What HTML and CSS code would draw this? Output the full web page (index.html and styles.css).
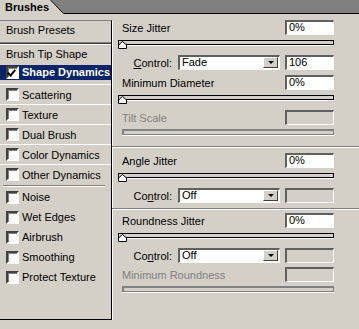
FILE: index.html
```html
<!DOCTYPE html>
<html lang="en">
<head>
<meta charset="UTF-8">
<meta name="viewport" content="width=device-width, initial-scale=1.0">
<title>Brushes</title>
<link rel="stylesheet" href="styles.css">
</head>
<body>
<div class="tabbar">
  <div class="tab">Brushes</div>
  <svg class="tab-slope" width="14" height="14" viewBox="0 0 14 14"><polygon points="0,0 1,0 14,14 0,14" fill="#d4d0c8"/><line x1="0.5" y1="0" x2="13.5" y2="13.5" stroke="#000"/></svg>
</div>

<div class="panel">
  <div class="list">
    <div class="head">Brush Presets</div>
    <div class="dbl"></div>
    <div class="head tip">Brush Tip Shape</div>
    <div class="item sel"><span class="chk on"></span>Shape Dynamics</div>
    <div class="item"><span class="chk"></span>Scattering</div>
    <div class="item"><span class="chk"></span>Texture</div>
    <div class="item"><span class="chk"></span>Dual Brush</div>
    <div class="item"><span class="chk"></span>Color Dynamics</div>
    <div class="item"><span class="chk"></span>Other Dynamics</div>
    <div class="split"></div>
    <div class="opt"><span class="chk"></span>Noise</div>
    <div class="opt"><span class="chk"></span>Wet Edges</div>
    <div class="opt"><span class="chk"></span>Airbrush</div>
    <div class="opt"><span class="chk"></span>Smoothing</div>
    <div class="opt"><span class="chk"></span>Protect Texture</div>
  </div>

  <div class="settings">
    <div class="field"><span>Size Jitter</span><span class="box">0%</span></div>
    <div class="track"><svg class="thumb" width="10" height="8" viewBox="0 0 10 8"><polygon points="0.5,7.5 0.5,4 4.5,0.5 8.5,4 8.5,7.5" fill="#fff" stroke="#000"/></svg></div>
    <div class="ctl"><span class="ctl-label"><u>C</u>ontrol:</span><span class="select">Fade<span class="drop"></span></span><span class="box">106</span></div>
    <div class="field gap5"><span>Minimum Diameter</span><span class="box">0%</span></div>
    <div class="track"><svg class="thumb" width="10" height="8" viewBox="0 0 10 8"><polygon points="0.5,7.5 0.5,4 4.5,0.5 8.5,4 8.5,7.5" fill="#fff" stroke="#000"/></svg></div>
    <div class="field gap10 off"><span>Tilt Scale</span><span class="box"></span></div>
    <div class="track off"></div>
    <div class="sep"></div>

    <div class="field gap5"><span>Angle Jitter</span><span class="box">0%</span></div>
    <div class="track"><svg class="thumb" width="10" height="8" viewBox="0 0 10 8"><polygon points="0.5,7.5 0.5,4 4.5,0.5 8.5,4 8.5,7.5" fill="#fff" stroke="#000"/></svg></div>
    <div class="ctl"><span class="ctl-label">Co<u>n</u>trol:</span><span class="select">Off<span class="drop"></span></span><span class="box"></span></div>
    <div class="sep short"></div>

    <div class="field gap3"><span>Roundness Jitter</span><span class="box">0%</span></div>
    <div class="track"><svg class="thumb" width="10" height="8" viewBox="0 0 10 8"><polygon points="0.5,7.5 0.5,4 4.5,0.5 8.5,4 8.5,7.5" fill="#fff" stroke="#000"/></svg></div>
    <div class="ctl"><span class="ctl-label">Co<u>n</u>trol:</span><span class="select">Off<span class="drop"></span></span><span class="box"></span></div>
    <div class="field gap4 off"><span>Minimum Roundness</span><span class="box"></span></div>
    <div class="track off"></div>
  </div>
</div>
</body>
</html>
```

FILE: styles.css
```css
body {
    margin: 0;
    background: #d4d0c8;
    font-family: "Liberation Sans", Arial, sans-serif;
    font-size: 11px;
    color: #000;
}

.tabbar {
    display: flex;
    height: 14px;
    background: linear-gradient(#808080 13px, #000 13px);
}

.tab {
    width: 50px;
    height: 14px;
    padding-left: 5px;
    box-sizing: border-box;
    background: #d4d0c8;
    font-weight: bold;
    line-height: 14px;
}

.tab-slope {
    display: block;
}

.panel {
    display: flex;
    align-items: flex-start;
}

/* left list */
.list {
    width: 112px;
    height: 300px;
    margin-top: 6px;
    box-sizing: border-box;
    border-top: 1px solid #808080;
    border-right: 1px solid #000;
    border-bottom: 1px solid #000;
    box-shadow: 1px 1px 0 #fff;
}

.head {
    height: 21px;
    line-height: 19px;
    padding-left: 6px;
}

.dbl {
    height: 3px;
    background: linear-gradient(#808080 1px, #404040 1px, #404040 2px, #fff 2px);
}

.head.tip {
    height: 19px;
    line-height: 18px;
}

.item, .opt {
    display: flex;
    align-items: center;
    height: 19px;
    padding-left: 6px;
    border-top: 1px solid #fff;
}

.item.sel {
    color: #fff;
    font-weight: bold;
    border-top-color: transparent;
    background: linear-gradient(#0a246a, #0a246a) no-repeat 0 0 / 100% 15px;
    align-items: flex-start;
    padding-top: 1px;
    height: 18px;
}

.opt {
    border-top: none;
    height: 20px;
}

.split {
    height: 2px;
    margin: 1px 6px 0 3px;
    background: linear-gradient(#808080 1px, #fff 1px);
}

.chk {
    width: 9px;
    height: 9px;
    margin-right: 3px;
    flex: none;
    background: #fff;
    border-style: solid;
    border-width: 2px;
    border-color: #404040 #fff #fff #404040;
    box-shadow: 1px 1px 0 #808080 inset;
    position: relative;
}

.chk.on::after {
    content: "";
    position: absolute;
    left: 1px;
    top: 0;
    width: 3px;
    height: 6px;
    border: solid #000;
    border-width: 0 2px 2px 0;
    transform: rotate(40deg);
}

/* right settings */
.settings {
    width: 216px;
    padding: 6px 0 0 6px;
}

.field {
    display: flex;
    align-items: center;
    justify-content: space-between;
    height: 15px;
    padding-left: 4px;
}

.field.off span:first-child {
    color: #808080;
}

.gap3 { margin-top: 3px; }
.gap4 { margin-top: 4px; }
.gap5 { margin-top: 5px; }
.gap10 { margin-top: 10px; }

.box {
    width: 49px;
    height: 15px;
    box-sizing: border-box;
    padding-left: 2px;
    line-height: 11px;
    background: #fff;
    border-style: solid;
    border-width: 2px 1px 1px 2px;
    border-color: #606060 #fff #fff #606060;
}

.off .box, .ctl .box:empty {
    background: #d4d0c8;
}

.track {
    position: relative;
    height: 5px;
    margin-top: 5px;
    box-sizing: border-box;
    border: 1px solid #000;
    background: #d4d0c8;
    box-shadow: 0 1px 0 #fff;
}

.track.off {
    margin: 4px 0 0 4px;
    border-color: #808080;
    border-width: 2px 1px 1px 2px;
    height: 6px;
}

.thumb {
    position: absolute;
    left: -1px;
    top: 0;
}

.ctl {
    display: flex;
    align-items: center;
    height: 15px;
    margin-top: 10px;
}

.ctl-label {
    width: 54px;
    margin-right: 6px;
    text-align: right;
}

.select {
    position: relative;
    width: 102px;
    height: 15px;
    box-sizing: border-box;
    padding-left: 2px;
    line-height: 11px;
    background: #fff;
    border-style: solid;
    border-width: 2px 1px 1px 2px;
    border-color: #606060 #fff #fff #606060;
}

.drop {
    position: absolute;
    right: 1px;
    top: 0;
    width: 15px;
    height: 11px;
    box-sizing: border-box;
    background: #d4d0c8;
    border-style: solid;
    border-width: 1px;
    border-color: #fff #404040 #404040 #fff;
}

.drop::after {
    content: "";
    position: absolute;
    left: 4px;
    top: 3px;
    border-style: solid;
    border-width: 3px 3px 0 3px;
    border-color: #000 transparent transparent transparent;
}

.ctl .box {
    margin-left: auto;
}

.sep {
    height: 2px;
    margin: 11px -25px 0 -6px;
    background: linear-gradient(#808080 1px, #fff 1px);
}

.sep.short {
    margin-top: 5px;
}
```
